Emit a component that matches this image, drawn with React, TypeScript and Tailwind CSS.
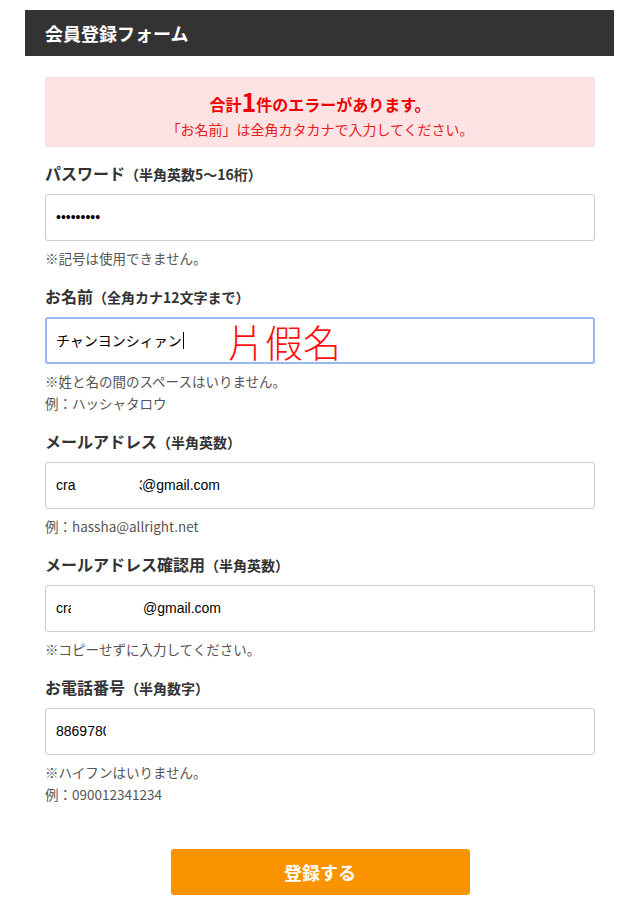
import React from "react";

function Label({ main, sub }: { main: string; sub: string }) {
  return (
    <div className="h-[24px] leading-[24px] text-[#333] font-bold text-[16px] whitespace-nowrap">
      {main}
      <span className="text-[14px]">{sub}</span>
    </div>
  );
}

function Box({ children, focus = false }: { children: React.ReactNode; focus?: boolean }) {
  return (
    <div
      className={
        focus
          ? "relative mt-[9px] h-[47px] rounded-[3px] bg-white flex items-center text-[14px] text-black border-2 border-[#97b9ef] px-[9px]"
          : "relative mt-[9px] h-[47px] rounded-[3px] bg-white flex items-center text-[14px] text-black border border-[#cccccc] px-[10px] font-['Liberation_Sans',Arial,sans-serif]"
      }
    >
      {children}
    </div>
  );
}

function Notes({ lines }: { lines: string[] }) {
  return (
    <div className="mt-[6px] text-[13.5px] leading-[22px] text-[#555]">
      {lines.map((l, i) => (
        <div key={i}>{l}</div>
      ))}
    </div>
  );
}

export default function App() {
  return (
    <div className="w-[632px] min-h-[916px] bg-white pt-[10px] font-['Noto_Sans_CJK_JP','Noto_Sans',sans-serif]">
      <div className="ml-[25px] w-[589px]">
        <div className="h-[46px] bg-[#333333] flex items-center px-[20px] text-white font-bold text-[18px]">
          会員登録フォーム
        </div>
        <div className="pl-[20px] pr-[19px]">
          <div className="mt-[21px] h-[70px] bg-[#fde3e3] flex flex-col items-center pt-[12px]">
            <div className="text-[#f00000] font-bold text-[16px] leading-[24px] h-[24px]">
              合計<span className="text-[25px] align-[-1px]">1</span>件のエラーがあります。
            </div>
            <div className="mt-[6px] text-[#e8201a] text-[14px] leading-[20px]">
              「お名前」は全角カタカナで入力してください。
            </div>
          </div>

          <div className="mt-[14px]">
            <Label main="パスワード" sub="（半角英数5〜16桁）" />
            <Box>
              <span>•••••••••</span>
            </Box>
            <Notes lines={["※記号は使用できません。"]} />
          </div>

          <div className="mt-[15px]">
            <Label main="お名前" sub="（全角カナ12文字まで）" />
            <Box focus>
              <span>チャンヨンシィァン</span>
              <span className="inline-block w-[1px] h-[17px] bg-black ml-[1px]" />
              <span className="absolute left-[180px] top-[-4px] text-[#ff1010] text-[38px] leading-[52px] font-light font-['Noto_Sans_CJK_TC','Noto_Sans_CJK_SC',sans-serif]">
                片假名
              </span>
            </Box>
            <Notes lines={["※姓と名の間のスペースはいりません。", "例：ハッシャタロウ"]} />
          </div>

          <div className="mt-[15px]">
            <Label main="メールアドレス" sub="（半角英数）" />
            <Box>
              <span className="inline-block w-[83px]">cra</span>
              <span className="inline-block w-[3px] overflow-hidden">3</span>
              <span>@gmail.com</span>
            </Box>
            <Notes lines={["例：hassha@allright.net"]} />
          </div>

          <div className="mt-[15px]">
            <Label main="メールアドレス確認用" sub="（半角英数）" />
            <Box>
              <span className="inline-block w-[87px] whitespace-nowrap">
                cr<span className="inline-block w-[3px] overflow-hidden align-bottom">a</span>
              </span>
              <span>@gmail.com</span>
            </Box>
            <Notes lines={["※コピーせずに入力してください。"]} />
          </div>

          <div className="mt-[15px]">
            <Label main="お電話番号" sub="（半角数字）" />
            <Box>
              <span>886978</span>
              <span className="inline-block w-[3px] overflow-hidden">0</span>
            </Box>
            <Notes lines={["※ハイフンはいりません。", "例：090012341234"]} />
          </div>

          <div className="mt-[44px] flex justify-center">
            <button className="w-[299px] h-[46px] rounded-[3px] bg-[#fb9300] text-white font-bold text-[18px]">
              登録する
            </button>
          </div>
        </div>
      </div>
    </div>
  );
}
